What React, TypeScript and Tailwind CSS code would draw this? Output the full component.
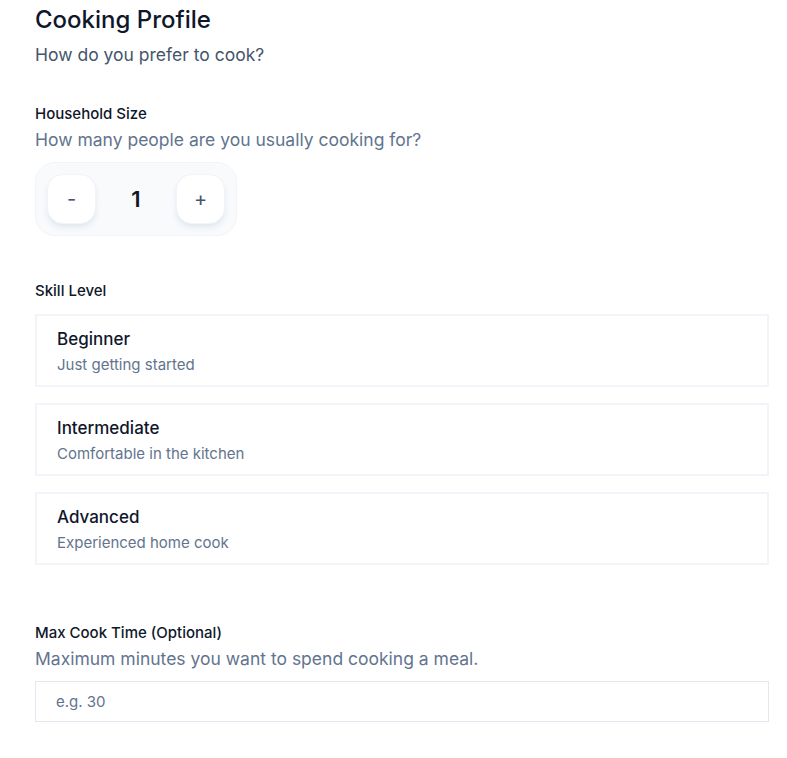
import React, { useState } from 'react';

const levels = [
  { id: 'beginner', title: 'Beginner', desc: 'Just getting started' },
  { id: 'intermediate', title: 'Intermediate', desc: 'Comfortable in the kitchen' },
  { id: 'advanced', title: 'Advanced', desc: 'Experienced home cook' },
];

export default function App() {
  const [size, setSize] = useState(1);
  const [level, setLevel] = useState<string | null>(null);
  const [time, setTime] = useState('');

  return (
    <div className="min-h-screen bg-white pl-[35px] pr-[18px] pt-[4px] pb-10 text-slate-900 font-['Inter',sans-serif]">
      <h1 className="text-2xl leading-8 font-medium text-slate-900">Cooking Profile</h1>
      <p className="mt-[5px] text-[17.5px] leading-7 text-slate-600">How do you prefer to cook?</p>

      <div className="mt-[35px]">
        <label className="block text-[15px] leading-5 font-medium text-slate-900">Household Size</label>
        <p className="mt-[2px] text-[17.5px] leading-7 text-slate-500">How many people are you usually cooking for?</p>
        <div className="mt-[8px] inline-flex items-center p-[11px] rounded-[20px] bg-slate-50 border border-slate-100">
          <button
            onClick={() => setSize(Math.max(1, size - 1))}
            className="w-[49px] h-[50px] rounded-2xl bg-white shadow-md shadow-slate-200 border border-slate-100 flex items-center justify-center text-xl text-slate-600"
          >
            -
          </button>
          <span className="w-[80px] text-center text-[22px] font-semibold text-slate-900">{size}</span>
          <button
            onClick={() => setSize(size + 1)}
            className="w-[49px] h-[50px] rounded-2xl bg-white shadow-md shadow-slate-200 border border-slate-100 flex items-center justify-center text-xl text-slate-600"
          >
            +
          </button>
        </div>
      </div>

      <div className="mt-[45px]">
        <label className="block text-[15px] leading-5 font-medium text-slate-900">Skill Level</label>
        <div className="mt-[13px] flex flex-col gap-4">
          {levels.map(l => (
            <button
              key={l.id}
              onClick={() => setLevel(l.id)}
              className={`text-left border-2 px-5 pt-[9px] pb-[10px] bg-white ${level === l.id ? 'border-slate-900' : 'border-slate-100'}`}
            >
              <div className="text-[17px] leading-7 font-medium text-slate-900">{l.title}</div>
              <div className="mt-[2px] text-[15px] leading-5 text-slate-500">{l.desc}</div>
            </button>
          ))}
        </div>
      </div>

      <div className="mt-[58px]">
        <label className="block text-[15px] leading-5 font-medium text-slate-900">Max Cook Time (Optional)</label>
        <p className="mt-[2px] text-[17.5px] leading-7 text-slate-500">Maximum minutes you want to spend cooking a meal.</p>
        <input
          type="number"
          value={time}
          onChange={e => setTime(e.target.value)}
          placeholder="e.g. 30"
          className="mt-[8px] block w-full h-[41px] border border-slate-200 px-5 text-[15px] text-slate-900 placeholder:text-slate-500 outline-none"
        />
      </div>
    </div>
  );
}
